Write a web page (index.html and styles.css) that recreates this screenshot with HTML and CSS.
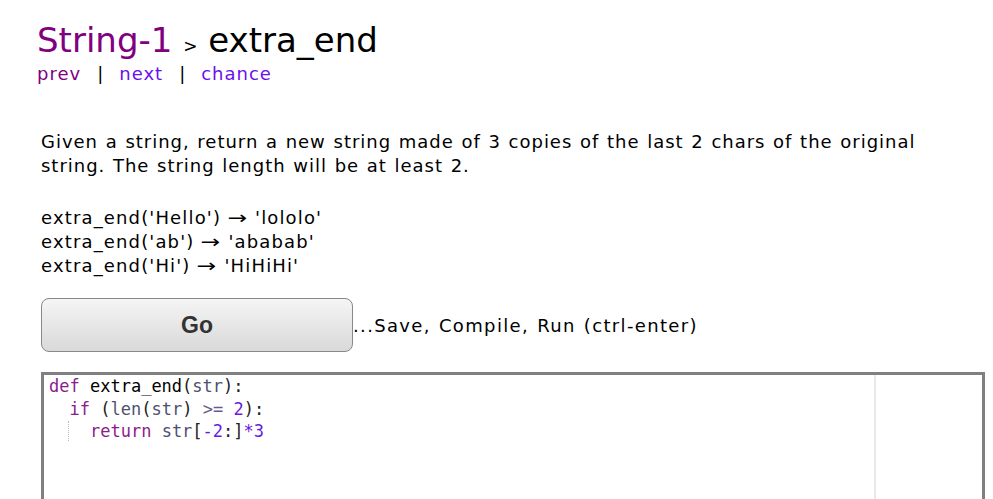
FILE: index.html
```html
<!DOCTYPE html>
<html>
<head>
<meta charset="utf-8">
<link rel="stylesheet" href="styles.css">
</head>
<body>
<div class="page">
  <div class="header">
    <div class="title"><span class="crumb">String-1</span> <span class="sep">&gt;</span> <span class="name">extra_end</span></div>
    <div class="nav"><a class="visited" href="#">prev</a><span class="bar">|</span><a href="#">next</a><span class="bar">|</span><a href="#">chance</a></div>
  </div>
  <div class="content">
    <p class="desc">Given a string, return a new string made of 3 copies of the last 2 chars of the original string. The string length will be at least 2.</p>
    <div class="examples">
      <div>extra_end('Hello') <span class="arrow">→</span> 'lololo'</div>
      <div>extra_end('ab') <span class="arrow">→</span> 'ababab'</div>
      <div>extra_end('Hi') <span class="arrow">→</span> 'HiHiHi'</div>
    </div>
    <div class="run-row">
      <button class="go">Go</button>
      <span class="hint">...Save, Compile, Run (ctrl-enter)</span>
    </div>
    <div class="editor">
      <div class="code">
        <div class="line"><span class="kw">def</span> <span class="fn">extra_end</span><span class="p">(</span><span class="v">str</span><span class="p">):</span></div>
        <div class="line">  <span class="kw">if</span> <span class="p">(</span><span class="v">len</span><span class="p">(</span><span class="v">str</span><span class="p">)</span> <span class="op">&gt;=</span> <span class="num">2</span><span class="p">):</span></div>
        <div class="line">  <span class="guide">  </span><span class="kw">return</span> <span class="v">str</span><span class="p">[</span><span class="num">-2</span><span class="p">:]</span><span class="num">*3</span></div>
      </div>
      <div class="margin-line"></div>
    </div>
  </div>
</div>
</body>
</html>
```
FILE: styles.css
```css
html, body {
  margin: 0;
  padding: 0;
  background: #fff;
}
body {
  font-family: "DejaVu Sans", Verdana, sans-serif;
  color: #000;
}
.page {
  padding: 20px 0 0 37px;
}
.title {
  font-size: 34px;
  line-height: 40px;
  white-space: nowrap;
}
.crumb {
  color: #800080;
}
.sep {
  font-size: 17px;
}
.name {
  color: #000;
}
.nav {
  font-size: 18px;
  line-height: 24px;
  letter-spacing: 1px;
  margin-top: -4px;
}
.nav a {
  color: #6a0ff0;
  text-decoration: none;
}
.nav a.visited {
  color: #800080;
}
.nav .bar {
  margin: 0 15px 0 16px;
}
.content {
  padding-left: 4px;
}
.desc {
  font-size: 18px;
  line-height: 24px;
  letter-spacing: 0.98px;
  word-spacing: 1px;
  margin: 44px 0 28px 0;
  width: 900px;
}
.examples {
  font-size: 18px;
  line-height: 24px;
  letter-spacing: 1.15px;
}
.arrow {
  display: inline-block;
  transform: scaleX(1.3);
  margin: 0 2px;
}
.run-row {
  display: flex;
  align-items: center;
  margin-top: 20px;
}
.go {
  width: 312px;
  height: 54px;
  border: 1px solid #888;
  border-radius: 8px;
  background: linear-gradient(#f5f5f5, #d9d9d9);
  font-family: "Liberation Sans", Arial, sans-serif;
  font-weight: bold;
  font-size: 23px;
  color: #333;
  padding: 0;
}
.hint {
  font-size: 18px;
  letter-spacing: 1.35px;
  word-spacing: 1px;
}
.editor {
  margin-top: 20px;
  width: 938px;
  height: 200px;
  border: 3px solid #808080;
  position: relative;
}
.code {
  font-family: "DejaVu Sans Mono", Consolas, monospace;
  font-size: 17px;
  line-height: 22.5px;
  padding: 0 0 0 5px;
  color: #000;
}
.line {
  white-space: pre;
}
.margin-line {
  position: absolute;
  left: 830px;
  top: 0;
  bottom: 0;
  width: 2px;
  background: #e8e8e8;
}
.kw { color: #8b1c8b; }
.fn { color: #000; }
.v { color: #4f4f6f; }
.p { color: #222; }
.op { color: #6a5a8a; }
.num { color: #6a1ae0; }
.guide {
  border-left: 1px dotted #bbb;
  margin-left: -1px;
}
```
